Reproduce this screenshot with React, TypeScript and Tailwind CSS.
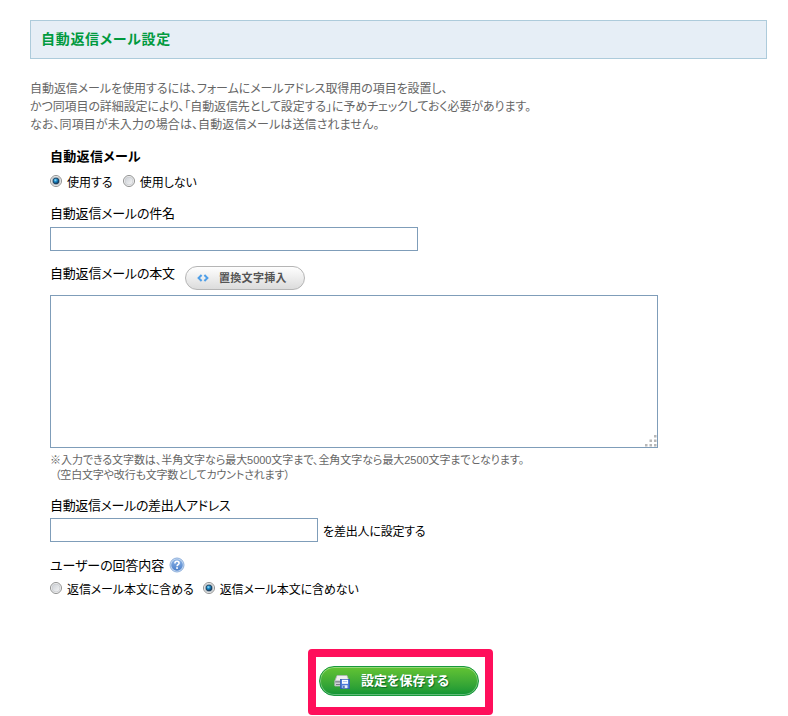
import { useState, type ReactNode } from "react";

type RadioProps = {
  name: string;
  checked: boolean;
  onChange: () => void;
  children: ReactNode;
};

function Radio({ name, checked, onChange, children }: RadioProps) {
  return (
    <label className="flex h-[14px] items-center">
      <input type="radio" name={name} checked={checked} onChange={onChange} className="sr-only" />
      <svg className="mr-[5px] h-3 w-3 shrink-0" viewBox="0 0 12 12">
        <circle cx="6" cy="6" r="5.5" fill="#fafafa" stroke="#8e8f8f" strokeWidth="1" />
        <circle cx="6" cy="6" r="4" fill="url(#radioFace)" stroke={checked ? "#a9b4ba" : "#c9cccf"} strokeWidth=".8" />
        {checked && <circle cx="6" cy="6" r="3" fill="url(#radioDot)" stroke="#16344f" strokeWidth=".7" />}
      </svg>
      <span className="pt-[3px]">{children}</span>
    </label>
  );
}

function Defs() {
  return (
    <svg className="absolute h-0 w-0" aria-hidden="true">
      <defs>
        <linearGradient id="radioFace" x1="0" y1="0" x2="1" y2="1">
          <stop offset="0" stopColor="#cbcfd5" />
          <stop offset="1" stopColor="#f6f6f6" />
        </linearGradient>
        <radialGradient id="radioDot" cx=".4" cy=".35" r=".6">
          <stop offset="0" stopColor="#9fe0fb" />
          <stop offset=".45" stopColor="#1b8cc9" />
          <stop offset="1" stopColor="#0b3a66" />
        </radialGradient>
        <linearGradient id="helpFace" x1="0" y1="0" x2="0" y2="1">
          <stop offset="0" stopColor="#8db4e6" />
          <stop offset="1" stopColor="#4a7fca" />
        </linearGradient>
      </defs>
    </svg>
  );
}

function HelpIcon() {
  return (
    <svg className="h-4 w-4" viewBox="0 0 16 16">
      <circle cx="8" cy="8" r="7" fill="#c9dbf1" stroke="#8fb0dc" strokeWidth="1" />
      <circle cx="8" cy="8" r="5.8" fill="url(#helpFace)" />
      <path d="M5.9 6.4c0-1.3.9-2.1 2.1-2.1s2.1.8 2.1 1.9c0 1.5-2 1.5-2 3" fill="none" stroke="#fff" strokeWidth="1.6" />
      <rect x="7.2" y="10.2" width="1.7" height="1.7" fill="#fff" />
    </svg>
  );
}

function SaveIcon() {
  return (
    <svg className="h-[15px] w-4" viewBox="0 0 16 15">
      <path d="M3 1.5h10l2 5.5v5H.8V7z" fill="#d0d2d6" stroke="#b4b8bd" strokeWidth=".8" />
      <path d="M3.4 2h9.2L14 6H2z" fill="#eeeef0" />
      <path d="M1.2 7h6v1.6h-6z" fill="#8d9299" />
      <path d="M2 10.5h4" stroke="#777c84" strokeWidth="1" />
      <rect x="6.4" y="5.4" width="9.2" height="9.2" fill="#4b79d8" stroke="#345cae" strokeWidth=".8" />
      <rect x="8" y="5.8" width="6" height="4" fill="#fff" />
      <path d="M8.8 7.6h4.4" stroke="#8fb0e8" strokeWidth=".8" />
      <rect x="8.5" y="11.2" width="5" height="3" fill="#e8eefa" />
      <rect x="9.2" y="11.6" width="1.4" height="2.4" fill="#345cae" />
    </svg>
  );
}

function ResizeGrip() {
  const dots = [
    [9, 0],
    [4.5, 4.5],
    [9, 4.5],
    [0, 9],
    [4.5, 9],
    [9, 9],
  ];
  return (
    <svg className="pointer-events-none absolute right-[1px] bottom-[1px] h-3 w-3" viewBox="0 0 12 12">
      {dots.map(([x, y]) => (
        <rect key={`${x}-${y}`} x={x} y={y} width="2.5" height="2.5" fill="#b8b8b8" />
      ))}
    </svg>
  );
}

export default function App() {
  const [reply, setReply] = useState(true);
  const [include, setInclude] = useState(false);

  return (
    <div className="h-[716px] w-[788px] overflow-hidden bg-white pt-5 font-['Liberation_Sans','Noto_Sans_CJK_JP',sans-serif] text-[12px] text-black [font-feature-settings:'palt']">
      <Defs />
      <h1 className="ml-[30px] flex h-[39px] w-[737px] items-center border border-[#adcbdb] bg-[#e6eef6] pl-[10px] text-[14px] font-bold tracking-[0.7px] whitespace-nowrap text-[#009a3e]">
        自動返信メール設定
      </h1>

      <div className="mt-[21px] ml-[30px] h-[67px] leading-[18px] whitespace-nowrap text-[#666]">
        <p className="tracking-[-0.06px]">自動返信メールを使用するには、フォームにメールアドレス取得用の項目を設置し、</p>
        <p className="tracking-[-0.1px]">かつ同項目の詳細設定により、「自動返信先として設定する」に予めチェックしておく必要があります。</p>
        <p className="tracking-[0.1px]">なお、同項目が未入力の場合は、自動返信メールは送信されません。</p>
      </div>

      <form className="ml-[50px] whitespace-nowrap" onSubmit={(e) => e.preventDefault()}>
        <h2 className="h-5 text-[13px] leading-5 font-bold tracking-[0.3px]">自動返信メール</h2>
        <div className="mt-[7px] flex h-[14px] gap-[10px]">
          <Radio name="reply" checked={reply} onChange={() => setReply(true)}>
            使用する
          </Radio>
          <Radio name="reply" checked={!reply} onChange={() => setReply(false)}>
            使用しない
          </Radio>
        </div>

        <p className="mt-4 h-[19px] text-[13px] leading-[19px] tracking-[-0.2px]">自動返信メールの件名</p>
        <input type="text" className="mt-1 block h-6 w-[368px] border border-[#7f9db9] bg-white outline-none" />

        <div className="mt-[15px] flex h-6">
          <p className="w-[135px] text-[13px] leading-[15px] tracking-[-0.2px]">自動返信メールの本文</p>
          <button
            type="button"
            className="flex h-6 w-[120px] items-center rounded-full border border-[#b5b5b5] bg-gradient-to-b from-[#fefefe] to-[#dcdcdc] pl-[11px] text-[11px] font-bold tracking-[0.3px] text-[#555]"
          >
            <svg className="mr-[10px] h-2 w-3" viewBox="0 0 12 8">
              <path d="M4.6 1 1.6 4l3 3M7.4 1l3 3-3 3" fill="none" stroke="#4f9fe8" strokeWidth="2" />
            </svg>
            置換文字挿入
          </button>
        </div>

        <div className="relative mt-[5px] h-[153px] w-[608px]">
          <textarea className="block h-full w-full resize-none border border-[#7f9db9] bg-white outline-none" />
          <ResizeGrip />
        </div>

        <div className="mt-[5px] text-[11px] leading-[15px] text-[#666]">
          <p className="tracking-[-0.06px]">※入力できる文字数は、半角文字なら最大5000文字まで、全角文字なら最大2500文字までとなります。</p>
          <p className="pl-[5px] tracking-[-0.17px]">（空白文字や改行も文字数としてカウントされます）</p>
        </div>

        <p className="mt-[13px] h-[19px] text-[13px] leading-[19px] tracking-[-0.35px]">自動返信メールの差出人アドレス</p>
        <div className="mt-[3px] flex h-6 items-center">
          <input type="text" className="mr-[5px] h-6 w-[268px] border border-[#7f9db9] bg-white outline-none" />
          <span className="pt-[3px] tracking-[-0.2px]">を差出人に設定する</span>
        </div>

        <div className="mt-[15px] flex h-4 items-center text-[13px]">
          <span className="w-[119px] pt-[2px] tracking-[-0.1px]">ユーザーの回答内容</span>
          <HelpIcon />
        </div>
        <div className="mt-2 flex h-[14px] gap-[9px] tracking-[-0.1px]">
          <Radio name="include" checked={include} onChange={() => setInclude(true)}>
            返信メール本文に含める
          </Radio>
          <Radio name="include" checked={!include} onChange={() => setInclude(false)}>
            返信メール本文に含めない
          </Radio>
        </div>
      </form>

      <div className="mt-[54px] ml-[308px] flex h-[66px] w-[185px] rounded-[4px] border-8 border-[#ff0f5b] pt-[9px] pl-[3px]">
        <button
          type="button"
          className="flex h-[30px] w-[160px] items-center rounded-full border border-[#189a3c] bg-gradient-to-b from-[#62c433] to-[#0d9535] pl-[14px] text-[13px] font-bold whitespace-nowrap text-white shadow-[inset_0_0_0_1px_rgba(255,255,255,0.35)] [text-shadow:1px_1px_1px_#0a6b25]"
        >
          <SaveIcon />
          <span className="ml-[11px]">設定を保存する</span>
        </button>
      </div>
    </div>
  );
}
